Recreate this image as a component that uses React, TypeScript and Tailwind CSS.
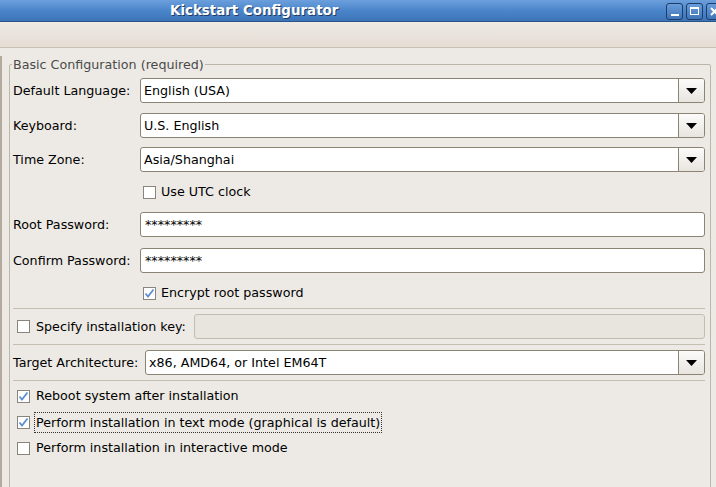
import React from 'react';

function Arrow() {
  return (
    <svg width="11" height="6" viewBox="0 0 11 6">
      <path d="M0 0h11L5.5 6z" fill="#000" />
    </svg>
  );
}

function Combo({ value, className = '' }: { value: string; className?: string }) {
  return (
    <div className={`flex h-[25px] rounded-[3px] border border-[#8b8374] bg-white ${className}`}>
      <div className="flex flex-1 items-center pl-[3px] whitespace-nowrap">{value}</div>
      <div className="flex w-[26px] items-center justify-center rounded-r-[2px] border-l border-[#8b8374] bg-gradient-to-b from-[#fcfbfa] to-[#e8e5df]">
        <Arrow />
      </div>
    </div>
  );
}

function Entry({ value, className = '' }: { value: string; className?: string }) {
  return (
    <div className={`flex h-[25px] items-center rounded-[3px] border border-[#8b8374] bg-white pl-[4px] ${className}`}>
      {value}
    </div>
  );
}

function Check({ checked = false }: { checked?: boolean }) {
  return (
    <span className="flex h-[13px] w-[13px] shrink-0 items-center justify-center border border-[#8a857c] bg-white">
      {checked && (
        <svg width="11" height="11" viewBox="0 0 11 11">
          <path d="M1.5 5.5L4 8.5L9.5 1.5" fill="none" stroke="#5b8fd0" strokeWidth="1.8" />
        </svg>
      )}
    </span>
  );
}

function Separator() {
  return <div className="h-px bg-[#c6beb2]" />;
}

function WinButton({ kind }: { kind: 'min' | 'max' | 'close' }) {
  return (
    <div className="flex h-[17px] w-[17px] shrink-0 items-center justify-center rounded-[3px] border border-[#1e3d69] bg-gradient-to-b from-[#6a9ddb] to-[#3f75b9]">
      {kind === 'min' && <div className="mt-[7px] h-[2px] w-[8px] bg-white" />}
      {kind === 'max' && <div className="h-[8px] w-[9px] border border-t-2 border-white" />}
      {kind === 'close' && (
        <svg width="9" height="9" viewBox="0 0 9 9">
          <path d="M1 1l7 7M8 1l-7 7" stroke="#fff" strokeWidth="2" />
        </svg>
      )}
    </div>
  );
}

export default function App() {
  return (
    <div className="flex h-[487px] w-[716px] flex-col overflow-hidden bg-[#edeae5] font-['DejaVu_Sans',sans-serif] text-[12.7px] text-black">
      {/* Title bar */}
      <div className="flex h-[22px] shrink-0 items-center border-b border-[#2b5488] bg-gradient-to-b from-[#6c9fdc] via-[#4a86ca] to-[#3d73b7]">
        <div className="flex-1 pl-[170px] pt-[2px] text-[13.4px] font-bold text-white [text-shadow:1px_1px_0_#1f3b63]">
          Kickstart Configurator
        </div>
        <div className="-mr-[7px] flex gap-[3px] pt-[1px]">
          <WinButton kind="min" />
          <WinButton kind="max" />
          <WinButton kind="close" />
        </div>
      </div>

      {/* Menu/toolbar strip */}
      <div className="h-[26px] shrink-0 border-b border-[#c9c0b4] bg-gradient-to-b from-[#eeeae4] to-[#e4ddd4]" />

      {/* Content */}
      <div className="flex-1 pt-[8px]">
        <div className="h-full border-l-2 border-[#b3aa9d] pl-[7px]">
          <fieldset className="h-[460px] w-[702px] rounded-[2px] border border-[#bdb5a8] pl-[3px] pr-[5px]">
            <legend className="-ml-[1px] px-[1px] leading-[17px] text-[#4a4a4a]">
              Basic Configuration (required)
            </legend>

            <div className="mt-[5px] flex items-center">
              <span className="w-[127px]">Default Language:</span>
              <Combo value="English (USA)" className="flex-1" />
            </div>
            <div className="mt-[10px] flex items-center">
              <span className="w-[127px]">Keyboard:</span>
              <Combo value="U.S. English" className="flex-1" />
            </div>
            <div className="mt-[9px] flex items-center">
              <span className="w-[127px]">Time Zone:</span>
              <Combo value="Asia/Shanghai" className="flex-1" />
            </div>
            <div className="mt-[12px] flex h-[16px] items-center gap-[5px] pl-[130px]">
              <Check />
              <span>Use UTC clock</span>
            </div>
            <div className="mt-[12px] flex items-center">
              <span className="w-[127px]">Root Password:</span>
              <Entry value="*********" className="flex-1" />
            </div>
            <div className="mt-[11px] flex items-center">
              <span className="w-[127px]">Confirm Password:</span>
              <Entry value="*********" className="flex-1" />
            </div>
            <div className="mt-[12px] flex h-[16px] items-center gap-[5px] pl-[130px]">
              <Check checked />
              <span>Encrypt root password</span>
            </div>

            <div className="mt-[7px]">
              <Separator />
            </div>

            <div className="mt-[5px] flex items-center pl-[4px]">
              <Check />
              <span className="ml-[6px] w-[158px]">Specify installation key:</span>
              <div className="h-[25px] flex-1 rounded-[3px] border border-[#c4bcb0] bg-[#e8e5df]" />
            </div>

            <div className="mt-[5px]">
              <Separator />
            </div>

            <div className="mt-[5px] flex items-center">
              <span className="w-[132px]">Target Architecture:</span>
              <Combo value="x86, AMD64, or Intel EM64T" className="flex-1" />
            </div>

            <div className="mt-[5px]">
              <Separator />
            </div>

            <div className="mt-[2px] flex flex-col pl-[4px]">
              <div className="flex h-[26px] items-center">
                <Check checked />
                <span className="ml-[6px]">Reboot system after installation</span>
              </div>
              <div className="flex h-[26px] items-center">
                <Check checked />
                <span className="ml-[4px] border border-dotted border-[#333] px-[1px] leading-[19px]">
                  Perform installation in text mode (graphical is default)
                </span>
              </div>
              <div className="flex h-[26px] items-center">
                <Check />
                <span className="ml-[6px]">Perform installation in interactive mode</span>
              </div>
            </div>
          </fieldset>
        </div>
      </div>
    </div>
  );
}
